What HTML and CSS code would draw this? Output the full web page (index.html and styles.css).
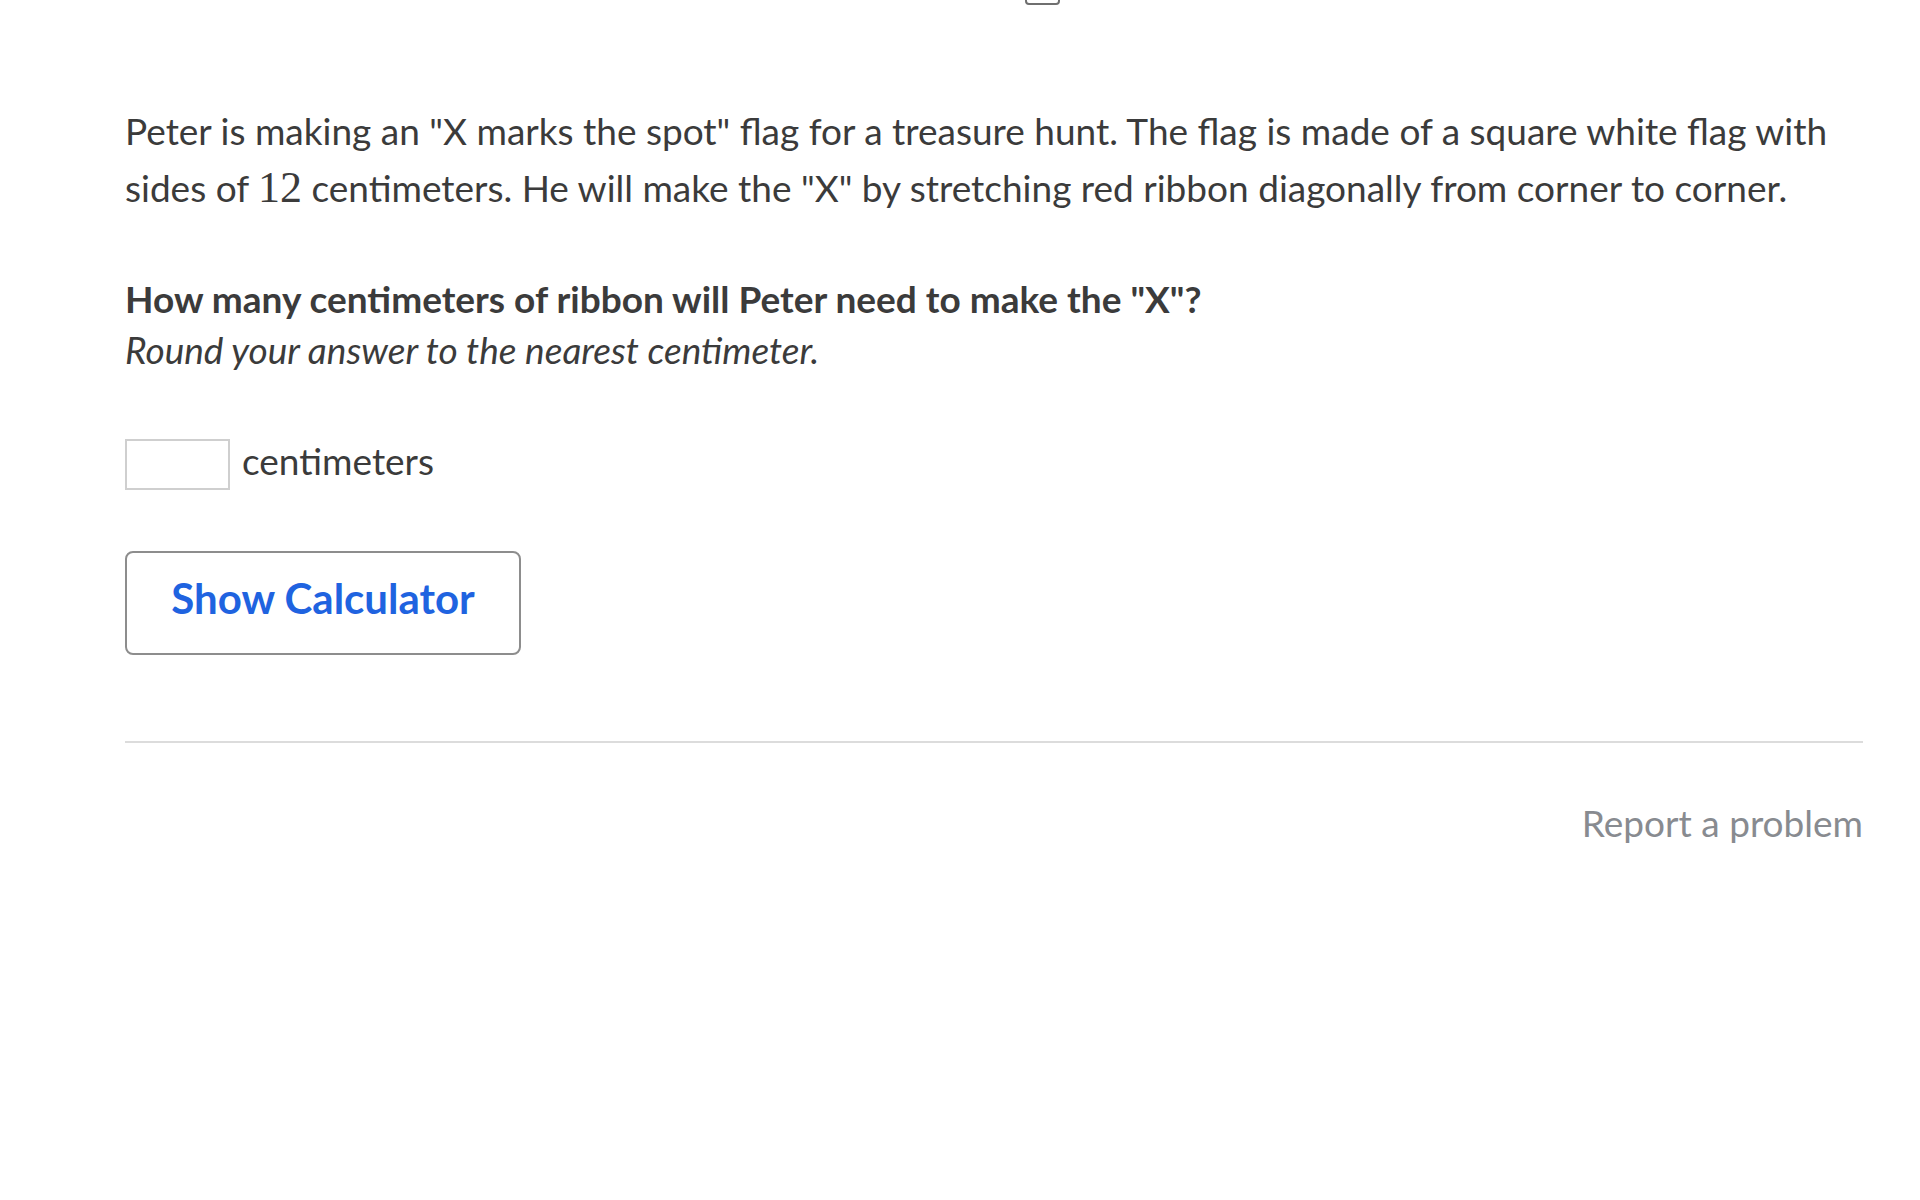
FILE: index.html
```html
<!DOCTYPE html>
<html>
<head>
<meta charset="utf-8">
<link rel="stylesheet" href="styles.css">
</head>
<body>
<div class="page">
  <div class="topbar"><div class="tab"></div></div>
  <p class="intro">Peter is making an "X marks the spot" flag for a treasure hunt. The flag is made of a square white flag with sides of <span class="math">12</span> centimeters. He will make the "X" by stretching red ribbon diagonally from corner to corner.</p>
  <div class="question">
    <div class="ask">How many centimeters of ribbon will Peter need to make the "X"?</div>
    <div class="hint">Round your answer to the nearest centimeter.</div>
  </div>
  <div class="answer">
    <input class="box" type="text">
    <span class="unit">centimeters</span>
  </div>
  <button class="calc">Show Calculator</button>
  <div class="rule"></div>
  <div class="footer"><span class="report">Report a problem</span></div>
</div>
</body>
</html>
```

FILE: styles.css
```css
html, body {
  margin: 0;
  padding: 0;
  background: #ffffff;
}
body {
  font-family: Lato, "Open Sans", sans-serif;
  color: #3b3b3b;
}
.page {
  width: 1738px;
  padding-left: 125px;
}
.topbar {
  display: flex;
  height: 0;
  overflow: visible;
}
.tab {
  margin-left: 900px;
  margin-top: -20px;
  width: 31px;
  height: 21px;
  border: 2px solid #6f6f6f;
  border-radius: 4px;
}
.intro {
  margin: 102px 0 0 0;
  font-size: 37px;
  line-height: 57px;
}
.math {
  font-family: "Liberation Serif", "Times New Roman", serif;
  font-size: 44px;
}
.question {
  margin-top: 57px;
  font-size: 37px;
  line-height: 51px;
}
.ask {
  font-weight: 700;
}
.hint {
  font-style: italic;
}
.answer {
  margin-top: 64px;
  display: flex;
  align-items: flex-start;
  gap: 12px;
  font-size: 37px;
}
.box {
  box-sizing: border-box;
  width: 105px;
  height: 51px;
  border: 2px solid #cfcfcf;
  margin: 0;
  padding: 0;
  background: #fff;
}
.unit {
  line-height: 44px;
}
.calc {
  display: block;
  box-sizing: border-box;
  margin-top: 61px;
  width: 396px;
  height: 104px;
  border: 2px solid #8d8d8d;
  border-radius: 8px;
  background: #fff;
  font-family: Lato, "Open Sans", sans-serif;
  font-weight: 700;
  font-size: 42px;
  color: #1f63e0;
  padding: 0 0 10px 0;
}
.rule {
  margin-top: 86px;
  height: 2px;
  background: #dcdcdc;
}
.footer {
  display: flex;
  justify-content: flex-end;
  margin-top: 58px;
}
.report {
  font-size: 37px;
  line-height: 44px;
  color: #888b90;
}
```
